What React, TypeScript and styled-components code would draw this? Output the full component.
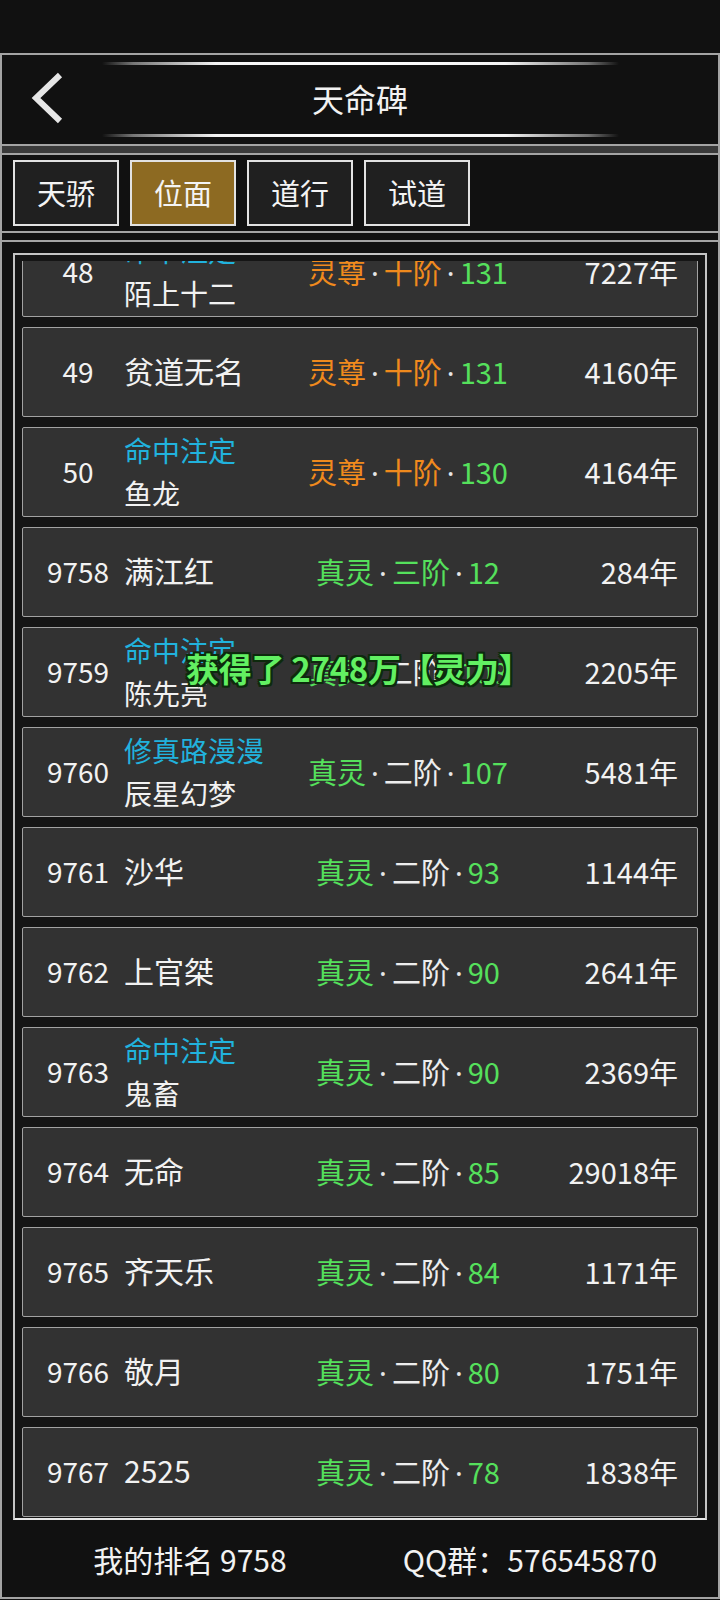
import React from "react";
import styled, { createGlobalStyle } from "styled-components";

const GlobalStyle = createGlobalStyle`
  html, body {
    margin: 0;
    padding: 0;
    background: #111111;
  }
  body {
    font-family: "Noto Sans CJK SC", "Noto Sans", sans-serif;
    color: #f0f0f0;
  }
`;

const Page = styled.div`
  position: relative;
  width: 720px;
  height: 1600px;
  background: #111111;
  display: flex;
  flex-direction: column;
  overflow: hidden;
`;

const StatusSpace = styled.div`
  height: 53px;
  flex: none;
`;

const Shell = styled.div`
  flex: none;
  height: 1546px;
  box-sizing: border-box;
  border: 2px solid #a4a4a4;
  display: flex;
  flex-direction: column;
`;

const Header = styled.header`
  flex: none;
  height: 89px;
  display: flex;
  flex-direction: column;
  align-items: center;
  border-bottom: 2px solid #a4a4a4;
`;

const GlowLine = styled.div<{ top?: boolean }>`
  width: 517px;
  height: 3px;
  flex: none;
  background: linear-gradient(
    90deg,
    rgba(255, 255, 255, 0) 0%,
    rgba(160, 160, 160, 0.7) 6%,
    #f4f4f4 22%,
    #ffffff 50%,
    #f4f4f4 78%,
    rgba(160, 160, 160, 0.7) 94%,
    rgba(255, 255, 255, 0) 100%
  );
  margin-top: ${(p) => (p.top ? "7px" : "0")};
  margin-bottom: ${(p) => (p.top ? "0" : "7px")};
`;

const TitleRow = styled.div`
  flex: 1;
  width: 100%;
  display: grid;
  grid-template-columns: 100px 1fr 100px;
  align-items: center;
  padding-bottom: 3px;
`;

const BackButton = styled.div`
  padding-left: 27px;
  display: flex;
  align-items: center;
`;

const Title = styled.h1`
  margin: 0;
  text-align: center;
  font-size: 32px;
  font-weight: 400;
  color: #f2f2f2;
  line-height: 1;
`;

const Band = styled.div`
  flex: none;
  height: 7px;
  background: #3a3a3a;
  border-bottom: 2px solid #a4a4a4;
`;

const TabBar = styled.nav`
  flex: none;
  height: 78px;
  box-sizing: border-box;
  padding: 5px 0 0 11px;
  display: flex;
  gap: 11px;
  border-bottom: 2px solid #a4a4a4;
`;

const Tab = styled.div<{ active?: boolean }>`
  width: 106px;
  height: 66px;
  box-sizing: border-box;
  border: 2px solid #e2e2e2;
  background: ${(p) => (p.active ? "#8d6a22" : "#202020")};
  color: #f4f4f4;
  font-size: 29px;
  display: flex;
  align-items: center;
  justify-content: center;
  padding-bottom: 2px;
`;

const Gap = styled.div`
  flex: none;
  height: 7px;
  border-bottom: 2px solid #a4a4a4;
`;

const ListPanel = styled.section`
  flex: 1;
  display: flex;
  flex-direction: column;
`;

const Frame = styled.div`
  margin: 11px 11px 0 11px;
  border: 2px solid #c4c4c4;
  border-bottom-color: #e8e8e8;
  padding: 6px 7px 0 7px;
  background: #151515;
`;

const Viewport = styled.div`
  height: 1257px;
  overflow: hidden;
`;

const List = styled.div`
  margin-top: -34px;
  display: flex;
  flex-direction: column;
  gap: 10px;
`;

const Row = styled.div`
  height: 90px;
  box-sizing: border-box;
  border: 1px solid #a2a2a2;
  border-radius: 2px;
  background: #323232;
  display: flex;
  align-items: center;
  padding: 0 19px 3px 9px;
  font-size: 28px;
  color: #f2f2f2;
`;

const Rank = styled.div`
  width: 92px;
  text-align: center;
  flex: none;
`;

const NameCell = styled.div<{ double?: boolean }>`
  width: 166px;
  flex: none;
  display: flex;
  flex-direction: column;
  line-height: 43px;
  font-size: ${(p) => (p.double ? "28px" : "30px")};
  margin-top: ${(p) => (p.double ? "3px" : "0")};
`;

const Tag = styled.span`
  color: #21b2dd;
  white-space: nowrap;
`;

const Name = styled.span`
  color: #f2f2f2;
  white-space: nowrap;
`;

const Realm = styled.div`
  width: 236px;
  flex: none;
  text-align: center;
  white-space: nowrap;
  font-size: 29px;
`;

const Part = styled.span<{ tone: "orange" | "green" | "white" }>`
  color: ${(p) =>
    p.tone === "orange" ? "#f08a1d" : p.tone === "green" ? "#55e05c" : "#ededed"};
`;

const Dot = styled.span`
  font-family: "Noto Sans", sans-serif;
  color: #e6e6e6;
  margin: 0 5px;
`;

const Years = styled.div`
  flex: 1;
  text-align: right;
  white-space: nowrap;
  font-size: 29px;
`;

const Footer = styled.footer`
  flex: 1;
  display: grid;
  grid-template-columns: 1fr 1fr;
  align-items: center;
  padding: 0 7px 0 7px;
  margin: 0 11px;
  font-size: 30px;
  color: #f2f2f2;
`;

const FooterItem = styled.div`
  text-align: center;
  white-space: nowrap;
`;

const Toast = styled.div`
  position: absolute;
  top: 644px;
  left: 186px;
  font-size: 33px;
  font-weight: 700;
  color: #62f062;
  white-space: nowrap;
  letter-spacing: -0.3px;
  text-shadow:
    -2px -2px 0 #0d2a0d,
    2px -2px 0 #0d2a0d,
    -2px 2px 0 #0d2a0d,
    2px 2px 0 #0d2a0d,
    0 2px 0 #0d2a0d,
    0 -2px 0 #0d2a0d,
    2px 0 0 #0d2a0d,
    -2px 0 0 #0d2a0d;
`;

type Style = "orange" | "green3" | "green2";

interface Entry {
  rank: string;
  tag?: string;
  name: string;
  realm: string;
  stage: string;
  level: string;
  style: Style;
  years: string;
}

const entries: Entry[] = [
  { rank: "48", tag: "命中注定", name: "陌上十二", realm: "灵尊", stage: "十阶", level: "131", style: "orange", years: "7227年" },
  { rank: "49", name: "贫道无名", realm: "灵尊", stage: "十阶", level: "131", style: "orange", years: "4160年" },
  { rank: "50", tag: "命中注定", name: "鱼龙", realm: "灵尊", stage: "十阶", level: "130", style: "orange", years: "4164年" },
  { rank: "9758", name: "满江红", realm: "真灵", stage: "三阶", level: "12", style: "green3", years: "284年" },
  { rank: "9759", tag: "命中注定", name: "陈先亮", realm: "真灵", stage: "二阶", level: "108", style: "green2", years: "2205年" },
  { rank: "9760", tag: "修真路漫漫", name: "辰星幻梦", realm: "真灵", stage: "二阶", level: "107", style: "green2", years: "5481年" },
  { rank: "9761", name: "沙华", realm: "真灵", stage: "二阶", level: "93", style: "green2", years: "1144年" },
  { rank: "9762", name: "上官桀", realm: "真灵", stage: "二阶", level: "90", style: "green2", years: "2641年" },
  { rank: "9763", tag: "命中注定", name: "鬼畜", realm: "真灵", stage: "二阶", level: "90", style: "green2", years: "2369年" },
  { rank: "9764", name: "无命", realm: "真灵", stage: "二阶", level: "85", style: "green2", years: "29018年" },
  { rank: "9765", name: "齐天乐", realm: "真灵", stage: "二阶", level: "84", style: "green2", years: "1171年" },
  { rank: "9766", name: "敬月", realm: "真灵", stage: "二阶", level: "80", style: "green2", years: "1751年" },
  { rank: "9767", name: "2525", realm: "真灵", stage: "二阶", level: "78", style: "green2", years: "1838年" },
];

const tabs = ["天骄", "位面", "道行", "试道"];

function RealmText({ e }: { e: Entry }) {
  const realmTone = e.style === "orange" ? "orange" : "green";
  const stageTone = e.style === "orange" ? "orange" : e.style === "green3" ? "green" : "white";
  return (
    <Realm>
      <Part tone={realmTone}>{e.realm}</Part>
      <Dot>·</Dot>
      <Part tone={stageTone}>{e.stage}</Part>
      <Dot>·</Dot>
      <Part tone="green">{e.level}</Part>
    </Realm>
  );
}

export default function App() {
  return (
    <>
      <GlobalStyle />
      <Page>
        <StatusSpace />
        <Shell>
          <Header>
            <GlowLine top />
            <TitleRow>
              <BackButton>
                <svg width="36" height="52" viewBox="0 0 36 52">
                  <polyline
                    points="31,3 7,26 31,49"
                    fill="none"
                    stroke="#e6e6e6"
                    strokeWidth="6"
                    strokeLinecap="butt"
                    strokeLinejoin="miter"
                  />
                </svg>
              </BackButton>
              <Title>天命碑</Title>
              <div />
            </TitleRow>
            <GlowLine />
          </Header>
          <Band />
          <TabBar>
            {tabs.map((t, i) => (
              <Tab key={t} active={i === 1}>
                {t}
              </Tab>
            ))}
          </TabBar>
          <Gap />
          <ListPanel>
            <Frame>
              <Viewport>
                <List>
                  {entries.map((e) => (
                    <Row key={e.rank}>
                      <Rank>{e.rank}</Rank>
                      <NameCell double={!!e.tag}>
                        {e.tag && <Tag>{e.tag}</Tag>}
                        <Name>{e.name}</Name>
                      </NameCell>
                      <RealmText e={e} />
                      <Years>{e.years}</Years>
                    </Row>
                  ))}
                </List>
              </Viewport>
            </Frame>
            <Footer>
              <FooterItem>我的排名 9758</FooterItem>
              <FooterItem>QQ群：576545870</FooterItem>
            </Footer>
          </ListPanel>
        </Shell>
        <Toast>获得了 2748万【灵力】</Toast>
      </Page>
    </>
  );
}
